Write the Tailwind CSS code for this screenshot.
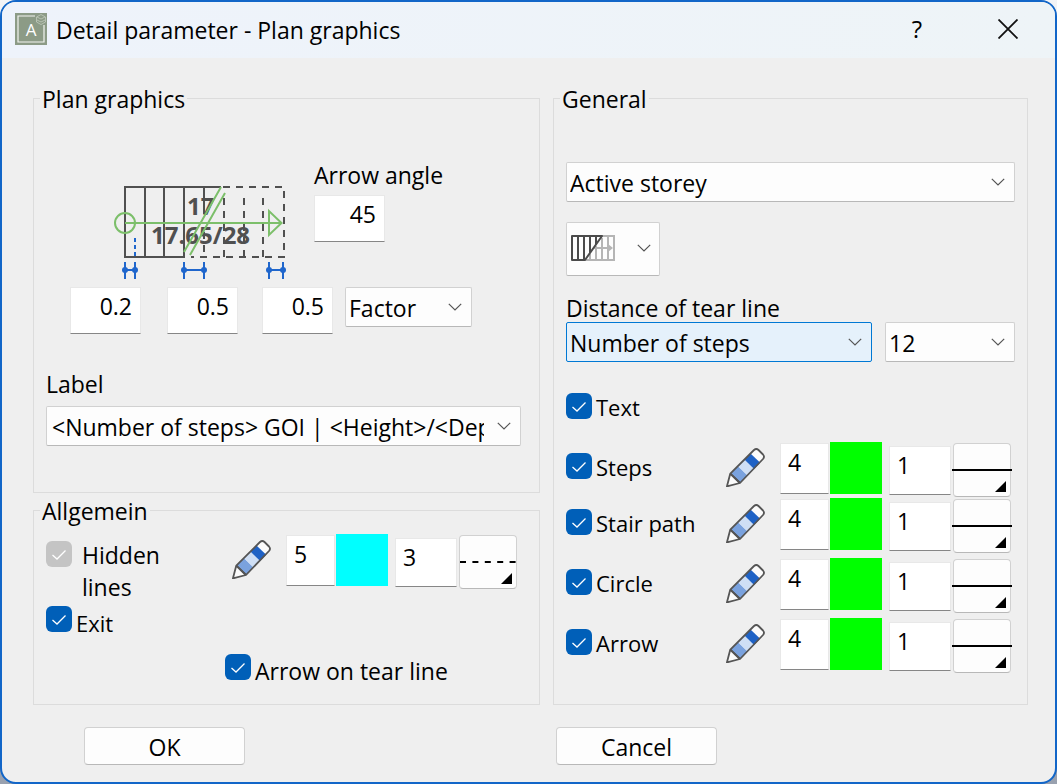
<!DOCTYPE html>
<html lang="en">
<head>
    <meta charset="UTF-8">
    <meta name="viewport" content="width=device-width, initial-scale=1.0">
    <title>Detail parameter - Plan graphics</title>
    <script src="https://cdn.jsdelivr.net/npm/@tailwindcss/browser@4"></script>
</head>
<body class="bg-linear-to-b from-gray-100 to-gray-400 font-['Open_Sans','Noto_Sans',sans-serif] text-[23px] leading-7 text-black">

    <!-- Shared icons -->
    <svg class="hidden">
        <symbol id="pen" viewBox="0 0 39 39">
            <path d="M4.3 25.6 28 2Q30.3 0 32.5 2L37 6.5Q39 8.8 37 11L14 35 .9 38.4Z" fill="#fbfbfb"/>
            <path d="M4.3 25.6 11.9 18 21.6 27.4 14 35Z" fill="#7aa2de"/>
            <path d="M11.9 18 18.4 11.5 28.1 20.9 21.6 27.4Z" fill="#cfdff5"/>
            <path d="M18.4 11.5 24.5 5.4 34.2 14.8 28.1 20.9Z" fill="#1f62c5"/>
            <path d="M4.3 25.6 28 2Q30.3 0 32.5 2L37 6.5Q39 8.8 37 11L14 35 .9 38.4ZL14 35" fill="none" stroke="#555" stroke-width="1.8" stroke-linejoin="round"/>
            <path d="M4.3 25.6 14 35" stroke="#555" stroke-width="1.8"/>
        </symbol>
        <symbol id="chevron" viewBox="0 0 14 8">
            <path d="M.8.8 7 7 13.2.8" fill="none" stroke="#555" stroke-width="1.2"/>
        </symbol>
        <symbol id="line-solid" viewBox="0 0 60 54">
            <path d="M0 26h60" stroke="#000" stroke-width="2"/>
            <path d="M54 37v11H43Z" fill="#000"/>
        </symbol>
        <symbol id="line-dashed" viewBox="0 0 60 54">
            <path d="M2 26h56" stroke="#000" stroke-width="2" stroke-dasharray="6 6.4"/>
            <path d="M54 37v11H43Z" fill="#000"/>
        </symbol>
    </svg>

    <div class="flex min-h-screen flex-col overflow-hidden rounded-2xl border-2 border-[#1266c8] bg-[#efefef]">

        <!-- Title bar -->
        <header class="flex h-14 items-center bg-linear-to-r from-[#eef3fb] to-[#eef4f7] pr-[37px] pb-0.5 pl-[13px]">
            <svg class="mr-[9px] size-8 shrink-0" viewBox="0 0 32 32">
                <path d="M0 0h32v32H0Z" fill="#8c9b86"/>
                <path d="M20 3H3v26h26V12" fill="none" stroke="#f4f6f2" stroke-width="1.2"/>
                <path d="M26 1.5 30.5 4v5L26 11.5 21.5 9V4ZM22 4l4 2 4-2M22 7l4 2 4-2" fill="none" stroke="#c3ccbe" stroke-width=".8"/>
                <text x="16" y="22.5" text-anchor="middle" font-size="17" fill="#fff">A</text>
            </svg>
            <h1 class="flex-1 pt-0.5">Detail parameter - Plan graphics</h1>
            <button type="button" class="mr-[73px] w-4 text-2xl font-medium" aria-label="Help">?</button>
            <button type="button" aria-label="Close">
                <svg class="size-5" viewBox="0 0 20 20"><path d="M.5.5l19 19M19.5.5l-19 19" stroke="#111" stroke-width="1.8"/></svg>
            </button>
        </header>

        <form class="pt-[26px] pr-[27px] pl-[31px]">
            <div class="grid grid-cols-[507fr_475fr] gap-x-[13px]">
                <div class="flex flex-col gap-[3px]">

                    <!-- Plan graphics -->
                    <fieldset class="border border-[#dcdcdc] pb-[46px]">
                        <legend class="ml-1.5 px-0.5 pt-0.5 leading-[26px]">Plan graphics</legend>
                        <div class="flex pt-[49px] pl-[79px]">
                            <svg class="mt-[23px] mr-[25px] h-24 w-44 shrink-0" viewBox="0 0 176 96" fill="none">
                                <g fill="#505050" font-size="24" font-weight="700">
                                    <text x="74" y="31">17</text>
                                    <text x="38" y="60">17.65/28</text>
                                </g>
                                <g stroke="#505050" stroke-width="2">
                                    <path d="M108 3H12V73H72M32 3V73M51 3V73M71 3V73M91 3V30"/>
                                    <path d="M110 3H171V73H78" stroke-dasharray="7 6"/>
                                    <path d="M91 48V73M111 14V73M131 14V73M150 14V73" stroke-dasharray="7 6"/>
                                </g>
                                <g stroke="#7cbf6a" stroke-width="2">
                                    <circle cx="12" cy="39" r="10"/>
                                    <path d="M12 39H168M156 27V51L168.500 39ZM108 3 71 68M112 9 77 71"/>
                                </g>
                                <g stroke="#1f66cc" stroke-width="2">
                                    <path d="M22 54V73" stroke-dasharray="4 3"/>
                                    <path d="M12 78V95M22 78V95M71 78V95M91 78V95M156 78V95M170 78V95M12 86H22M71 86H91M156 86H170"/>
                                </g>
                                <g fill="#1f66cc">
                                    <circle cx="12" cy="86" r="3"/>
                                    <circle cx="22" cy="86" r="3"/>
                                    <circle cx="71" cy="86" r="3"/>
                                    <circle cx="91" cy="86" r="3"/>
                                    <circle cx="156" cy="86" r="3"/>
                                    <circle cx="170" cy="86" r="3"/>
                                </g>
                            </svg>
                            <div>
                                <label for="angle" class="block">Arrow angle</label>
                                <input id="angle" value="45" class="mt-1.5 block h-[47px] w-[71px] border border-[#e8e8e8] border-b-[#868686] bg-white pr-2 pb-2.5 text-right">
                            </div>
                        </div>
                        <div class="mt-[7px] flex items-start pl-9">
                            <input aria-label="Start offset" value="0.2" class="mr-[26px] h-[47px] w-[71px] border border-[#e8e8e8] border-b-[#868686] bg-white pr-2 pb-2.5 text-right">
                            <input aria-label="Tear offset" value="0.5" class="mr-6 h-[47px] w-[71px] border border-[#e8e8e8] border-b-[#868686] bg-white pr-2 pb-2.5 text-right">
                            <input aria-label="End offset" value="0.5" class="mr-3 h-[47px] w-[71px] border border-[#e8e8e8] border-b-[#868686] bg-white pr-2 pb-2.5 text-right">
                            <div class="relative">
                                <select aria-label="Unit" class="h-10 w-[127px] appearance-none rounded-xs border border-[#d1d1d1] border-b-[#b8b8b8] bg-[#fdfdfd] pt-0.5 pr-9 pl-[3px] leading-9">
                                    <option>Factor</option>
                                </select>
                                <svg class="pointer-events-none absolute top-4 right-2.5 h-2 w-3.5"><use href="#chevron"/></svg>
                            </div>
                        </div>
                        <div class="mt-9 pr-[18px] pl-3">
                            <label for="label" class="block">Label</label>
                            <div class="relative mt-2">
                                <select id="label" class="h-10 w-full appearance-none rounded-xs border border-[#d1d1d1] border-b-[#b8b8b8] bg-[#fdfdfd] pt-0.5 pr-9 pl-[5px] leading-9">
                                    <option>&lt;Number of steps&gt; GOI | &lt;Height&gt;/&lt;Depth&gt;</option>
                                </select>
                                <svg class="pointer-events-none absolute top-4 right-2.5 h-2 w-3.5"><use href="#chevron"/></svg>
                            </div>
                        </div>
                    </fieldset>

                    <!-- Allgemein -->
                    <fieldset class="border border-[#dcdcdc] pb-[17px]">
                        <legend class="ml-1.5 px-0.5 pt-0.5 leading-[26px]">Allgemein</legend>
                        <div class="flex items-start pt-2.5 pl-3">
                            <div class="w-[186px] pt-[5px] leading-8">
                                <label class="flex w-32 items-start gap-2.5">
                                    <span class="relative mt-0.5 size-[26px] shrink-0">
                                        <input type="checkbox" checked disabled class="block size-[26px] appearance-none rounded-md bg-[#c4c4c4]">
                                        <svg class="pointer-events-none absolute inset-0" viewBox="0 0 26 26"><path d="M6.500 14 11 18 19.500 9.500" fill="none" stroke="#fff" stroke-width="1.3"/></svg>
                                    </span>
                                    <span>Hidden lines</span>
                                </label>
                                <label class="mt-[3px] flex items-start gap-1 text-[22px] leading-8">
                                    <span class="relative size-[26px] shrink-0">
                                        <input type="checkbox" checked class="block size-[26px] appearance-none rounded-md bg-[#005fb8]">
                                        <svg class="pointer-events-none absolute inset-0" viewBox="0 0 26 26"><path d="M6.500 14 11 18 19.500 9.500" fill="none" stroke="#fff" stroke-width="1.3"/></svg>
                                    </span>
                                    <span class="mt-px">Exit</span>
                                </label>
                            </div>
                            <div class="flex items-start">
                                <svg class="mt-1.5 mr-[15px] size-[39px]"><use href="#pen"/></svg>
                                <input aria-label="Hidden lines pen" value="5" class="mt-px mr-px h-[51px] w-[49px] border border-[#e8e8e8] border-b-[#868686] bg-white pb-3.5 pl-[7px]">
                                <button type="button" aria-label="Hidden lines colour" class="mr-[7px] h-[52px] w-[52px] bg-[#00ffff]"></button>
                                <input aria-label="Hidden lines line" value="3" class="mt-1 mr-0.5 h-[49px] w-[62px] border border-[#e8e8e8] border-b-[#868686] bg-white pb-3 pl-[7px]">
                                <button type="button" aria-label="Hidden lines line type" class="mt-px h-[54px] w-[58px] rounded-sm border border-[#d1d1d1] border-b-[#b8b8b8] bg-[#fdfdfd]">
                                    <svg class="-mx-0.5 h-[54px] w-[60px]"><use href="#line-dashed"/></svg>
                                </button>
                            </div>
                        </div>
                        <label class="mt-[15px] ml-[191px] flex items-start gap-1 leading-8">
                            <span class="relative size-[26px] shrink-0">
                                <input type="checkbox" checked class="block size-[26px] appearance-none rounded-md bg-[#005fb8]">
                                <svg class="pointer-events-none absolute inset-0" viewBox="0 0 26 26"><path d="M6.500 14 11 18 19.500 9.500" fill="none" stroke="#fff" stroke-width="1.3"/></svg>
                            </span>
                            <span class="mt-px">Arrow on tear line</span>
                        </label>
                    </fieldset>
                </div>

                <!-- General -->
                <fieldset class="border border-[#dcdcdc]">
                    <legend class="ml-1.5 px-0.5 pt-0.5 leading-[26px]">General</legend>
                    <div class="px-3 pt-[50px]">
                        <div class="relative">
                            <select aria-label="Storey" class="h-10 w-full appearance-none rounded-xs border border-[#d1d1d1] border-b-[#b8b8b8] bg-[#fdfdfd] pt-0.5 pr-9 pl-[3px] leading-9">
                                <option>Active storey</option>
                            </select>
                            <svg class="pointer-events-none absolute top-4 right-2.5 h-2 w-3.5"><use href="#chevron"/></svg>
                        </div>
                        <button type="button" aria-label="Display type" class="mt-5 flex h-[54px] w-[94px] items-center justify-between rounded-xs border border-[#d1d1d1] border-b-[#b8b8b8] bg-[#fdfdfd] pr-2 pb-0.5 pl-1">
                            <svg class="h-[26px] w-[44px]" viewBox="0 0 44 26" fill="none">
                                <path d="M31 1H43V25H14M19 19V25M25 11V25M31 3V25M37 1V25" stroke="#b5b5b5" stroke-width="2"/>
                                <path d="M23 13H40" stroke="#b5b5b5" stroke-width="2"/>
                                <path d="M37 9 42 13 37 17Z" fill="#b5b5b5"/>
                                <path d="M31 1H1V25H14ZM7 1V25M13 1V25M19 1V18M25 1V9" stroke="#4b4b4b" stroke-width="2" stroke-linejoin="round"/>
                            </svg>
                            <svg class="h-2 w-3.5"><use href="#chevron"/></svg>
                        </button>
                        <label for="distance" class="mt-[18px] block">Distance of tear line</label>
                        <div class="flex gap-[13px]">
                            <div class="relative flex-1">
                                <select id="distance" class="h-10 w-full appearance-none rounded-xs border border-[#0078d4] bg-[#e5f1fb] pt-0.5 pr-9 pl-[3px] leading-9">
                                    <option>Number of steps</option>
                                </select>
                                <svg class="pointer-events-none absolute top-4 right-2.5 h-2 w-3.5"><use href="#chevron"/></svg>
                            </div>
                            <div class="relative">
                                <select aria-label="Step count" class="h-10 w-[130px] appearance-none rounded-xs border border-[#d1d1d1] border-b-[#b8b8b8] bg-[#fdfdfd] pt-0.5 pr-9 pl-[3px] leading-9">
                                    <option>12</option>
                                </select>
                                <svg class="pointer-events-none absolute top-4 right-2.5 h-2 w-3.5"><use href="#chevron"/></svg>
                            </div>
                        </div>
                    </div>

                    <label class="mt-[31px] ml-3 flex items-start gap-1 text-[22px] leading-7">
                        <span class="relative size-[26px] shrink-0">
                            <input type="checkbox" checked class="block size-[26px] appearance-none rounded-md bg-[#005fb8]">
                            <svg class="pointer-events-none absolute inset-0" viewBox="0 0 26 26"><path d="M6.500 14 11 18 19.500 9.500" fill="none" stroke="#fff" stroke-width="1.3"/></svg>
                        </span>
                        <span>Text</span>
                    </label>

                    <div class="mt-[21px] flex items-start pr-4 pl-3">
                        <label class="mt-[11px] flex flex-1 items-start gap-1 text-[22px] leading-7">
                            <span class="relative size-[26px] shrink-0">
                                <input type="checkbox" checked class="block size-[26px] appearance-none rounded-md bg-[#005fb8]">
                                <svg class="pointer-events-none absolute inset-0" viewBox="0 0 26 26"><path d="M6.500 14 11 18 19.500 9.500" fill="none" stroke="#fff" stroke-width="1.3"/></svg>
                            </span>
                            <span>Steps</span>
                        </label>
                        <svg class="mt-1.5 mr-[15px] size-[39px]"><use href="#pen"/></svg>
                        <input aria-label="Steps pen" value="4" class="mt-px mr-px h-[51px] w-[49px] border border-[#e8e8e8] border-b-[#868686] bg-white pb-3.5 pl-[7px]">
                        <button type="button" aria-label="Steps colour" class="mr-[7px] h-[52px] w-[52px] bg-[#00ff00]"></button>
                        <input aria-label="Steps line" value="1" class="mt-1 mr-0.5 h-[49px] w-[62px] border border-[#e8e8e8] border-b-[#868686] bg-white pb-3 pl-[7px]">
                        <button type="button" aria-label="Steps line type" class="mt-px h-[54px] w-[58px] rounded-sm border border-[#d1d1d1] border-b-[#b8b8b8] bg-[#fdfdfd]">
                            <svg class="-mx-0.5 h-[54px] w-[60px]"><use href="#line-solid"/></svg>
                        </button>
                    </div>

                    <div class="mt-px flex items-start pr-4 pl-3">
                        <label class="mt-[11px] flex flex-1 items-start gap-1 text-[22px] leading-7">
                            <span class="relative size-[26px] shrink-0">
                                <input type="checkbox" checked class="block size-[26px] appearance-none rounded-md bg-[#005fb8]">
                                <svg class="pointer-events-none absolute inset-0" viewBox="0 0 26 26"><path d="M6.500 14 11 18 19.500 9.500" fill="none" stroke="#fff" stroke-width="1.3"/></svg>
                            </span>
                            <span>Stair path</span>
                        </label>
                        <svg class="mt-1.5 mr-[15px] size-[39px]"><use href="#pen"/></svg>
                        <input aria-label="Stair path pen" value="4" class="mt-px mr-px h-[51px] w-[49px] border border-[#e8e8e8] border-b-[#868686] bg-white pb-3.5 pl-[7px]">
                        <button type="button" aria-label="Stair path colour" class="mr-[7px] h-[52px] w-[52px] bg-[#00ff00]"></button>
                        <input aria-label="Stair path line" value="1" class="mt-1 mr-0.5 h-[49px] w-[62px] border border-[#e8e8e8] border-b-[#868686] bg-white pb-3 pl-[7px]">
                        <button type="button" aria-label="Stair path line type" class="mt-px h-[54px] w-[58px] rounded-sm border border-[#d1d1d1] border-b-[#b8b8b8] bg-[#fdfdfd]">
                            <svg class="-mx-0.5 h-[54px] w-[60px]"><use href="#line-solid"/></svg>
                        </button>
                    </div>

                    <div class="mt-[5px] flex items-start pr-4 pl-3">
                        <label class="mt-[11px] flex flex-1 items-start gap-1 text-[22px] leading-7">
                            <span class="relative size-[26px] shrink-0">
                                <input type="checkbox" checked class="block size-[26px] appearance-none rounded-md bg-[#005fb8]">
                                <svg class="pointer-events-none absolute inset-0" viewBox="0 0 26 26"><path d="M6.500 14 11 18 19.500 9.500" fill="none" stroke="#fff" stroke-width="1.3"/></svg>
                            </span>
                            <span>Circle</span>
                        </label>
                        <svg class="mt-1.5 mr-[15px] size-[39px]"><use href="#pen"/></svg>
                        <input aria-label="Circle pen" value="4" class="mt-px mr-px h-[51px] w-[49px] border border-[#e8e8e8] border-b-[#868686] bg-white pb-3.5 pl-[7px]">
                        <button type="button" aria-label="Circle colour" class="mr-[7px] h-[52px] w-[52px] bg-[#00ff00]"></button>
                        <input aria-label="Circle line" value="1" class="mt-1 mr-0.5 h-[49px] w-[62px] border border-[#e8e8e8] border-b-[#868686] bg-white pb-3 pl-[7px]">
                        <button type="button" aria-label="Circle line type" class="mt-px h-[54px] w-[58px] rounded-sm border border-[#d1d1d1] border-b-[#b8b8b8] bg-[#fdfdfd]">
                            <svg class="-mx-0.5 h-[54px] w-[60px]"><use href="#line-solid"/></svg>
                        </button>
                    </div>

                    <div class="mt-[5px] flex items-start pr-4 pl-3">
                        <label class="mt-[11px] flex flex-1 items-start gap-1 text-[22px] leading-7">
                            <span class="relative size-[26px] shrink-0">
                                <input type="checkbox" checked class="block size-[26px] appearance-none rounded-md bg-[#005fb8]">
                                <svg class="pointer-events-none absolute inset-0" viewBox="0 0 26 26"><path d="M6.500 14 11 18 19.500 9.500" fill="none" stroke="#fff" stroke-width="1.3"/></svg>
                            </span>
                            <span>Arrow</span>
                        </label>
                        <svg class="mt-1.5 mr-[15px] size-[39px]"><use href="#pen"/></svg>
                        <input aria-label="Arrow pen" value="4" class="mt-px mr-px h-[51px] w-[49px] border border-[#e8e8e8] border-b-[#868686] bg-white pb-3.5 pl-[7px]">
                        <button type="button" aria-label="Arrow colour" class="mr-[7px] h-[52px] w-[52px] bg-[#00ff00]"></button>
                        <input aria-label="Arrow line" value="1" class="mt-1 mr-0.5 h-[49px] w-[62px] border border-[#e8e8e8] border-b-[#868686] bg-white pb-3 pl-[7px]">
                        <button type="button" aria-label="Arrow line type" class="mt-px h-[54px] w-[58px] rounded-sm border border-[#d1d1d1] border-b-[#b8b8b8] bg-[#fdfdfd]">
                            <svg class="-mx-0.5 h-[54px] w-[60px]"><use href="#line-solid"/></svg>
                        </button>
                    </div>
                </fieldset>
            </div>

            <!-- Actions -->
            <div class="mt-[22px] grid grid-cols-[507fr_475fr] gap-x-[13px]">
                <button type="submit" class="ml-[51px] h-[38px] w-[161px] rounded-sm border border-[#d1d1d1] border-b-[#b8b8b8] bg-[#fdfdfd] pt-0.5">OK</button>
                <button type="button" class="ml-[3px] h-[38px] w-[161px] rounded-sm border border-[#d1d1d1] border-b-[#b8b8b8] bg-[#fdfdfd] pt-0.5">Cancel</button>
            </div>
        </form>
    </div>
</body>
</html>
